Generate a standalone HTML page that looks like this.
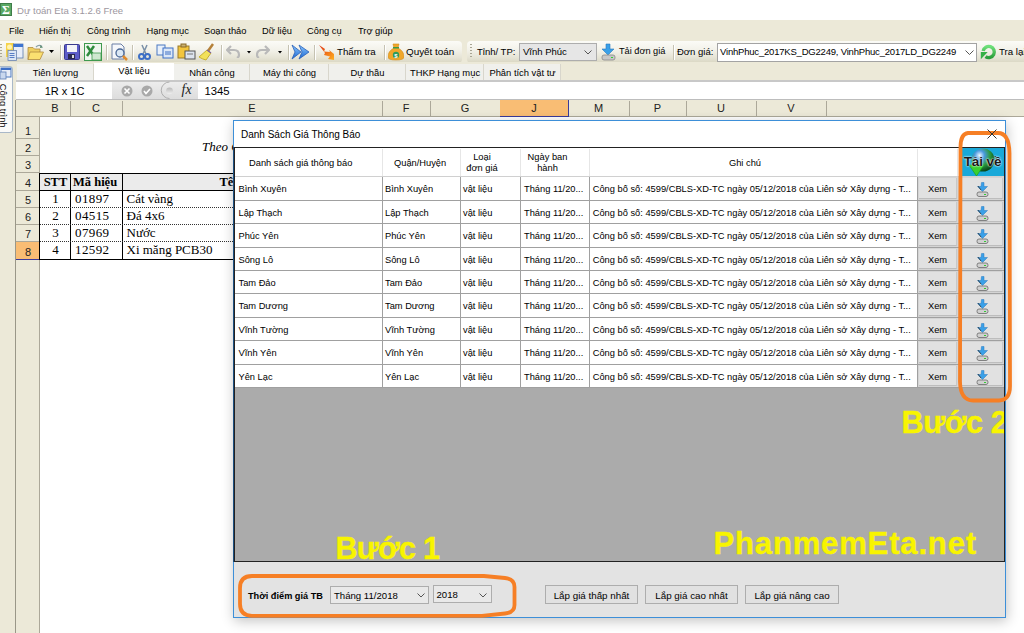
<!DOCTYPE html>
<html><head><meta charset="utf-8">
<style>
*{margin:0;padding:0;box-sizing:border-box}
html,body{width:1024px;height:633px;overflow:hidden;background:#fff;font-family:"Liberation Sans",sans-serif;color:#000}
.a{position:absolute}
.t{position:absolute;white-space:nowrap;line-height:1}
.sr{font-family:"Liberation Serif",serif}
</style></head><body>

<div class="a" style="left:0;top:0;width:1024px;height:20px;background:#fff"></div>
<div class="a" style="left:0;top:3px;width:12px;height:13px;background:#5aa865;border:1px solid #3f7d49"></div>
<div class="t sr" style="left:2px;top:4px;font-size:12px;color:#fff;font-weight:bold">&Sigma;</div>
<div class="t" style="left:17px;top:6px;font-size:9.6px;color:#9d97a0">Dự toán Eta 3.1.2.6 Free</div>
<div class="a" style="left:0;top:20px;width:1024px;height:21px;background:#ece9d8"></div>
<div class="t" style="left:9px;top:27px;font-size:9.3px">File</div>
<div class="t" style="left:39px;top:27px;font-size:9.3px">Hiển thị</div>
<div class="t" style="left:87px;top:27px;font-size:9.3px">Công trình</div>
<div class="t" style="left:146.5px;top:27px;font-size:9.3px">Hạng mục</div>
<div class="t" style="left:204px;top:27px;font-size:9.3px">Soạn thảo</div>
<div class="t" style="left:262px;top:27px;font-size:9.3px">Dữ liệu</div>
<div class="t" style="left:307px;top:27px;font-size:9.3px">Công cụ</div>
<div class="t" style="left:358px;top:27px;font-size:9.3px">Trợ giúp</div>
<div class="a" style="left:0;top:41px;width:1024px;height:21px;background:#ece9d8"></div>
<div class="a" style="left:0;top:41px;width:462px;height:21.5px;background:linear-gradient(#fbfbf7 0%,#f3f2ea 40%,#e6e4d6 75%,#d9d6c2 100%);border-radius:0 4px 4px 0"></div>
<div class="a" style="left:467px;top:41px;width:557px;height:21.5px;background:linear-gradient(#fbfbf7 0%,#f3f2ea 40%,#e6e4d6 75%,#d9d6c2 100%);border-radius:4px 0 0 4px"></div>
<div class="a" style="left:0;top:44px;width:2px;height:14px;background:repeating-linear-gradient(#a8a594 0 1px,transparent 1px 3px)"></div>
<div class="a" style="left:470px;top:44px;width:2px;height:14px;background:repeating-linear-gradient(#a8a594 0 1px,transparent 1px 3px)"></div>
<div class="a" style="left:60px;top:45px;width:1px;height:15px;background:#c5c2b2;box-shadow:1px 0 0 #fff"></div>
<div class="a" style="left:106px;top:45px;width:1px;height:15px;background:#c5c2b2;box-shadow:1px 0 0 #fff"></div>
<div class="a" style="left:132px;top:45px;width:1px;height:15px;background:#c5c2b2;box-shadow:1px 0 0 #fff"></div>
<div class="a" style="left:221px;top:45px;width:1px;height:15px;background:#c5c2b2;box-shadow:1px 0 0 #fff"></div>
<div class="a" style="left:288px;top:45px;width:1px;height:15px;background:#c5c2b2;box-shadow:1px 0 0 #fff"></div>
<div class="a" style="left:314px;top:45px;width:1px;height:15px;background:#c5c2b2;box-shadow:1px 0 0 #fff"></div>
<div class="a" style="left:384px;top:45px;width:1px;height:15px;background:#c5c2b2;box-shadow:1px 0 0 #fff"></div>
<div class="a" style="left:673px;top:45px;width:1px;height:15px;background:#c5c2b2;box-shadow:1px 0 0 #fff"></div>
<svg class="a" style="left:5px;top:43px" width="19" height="18" viewBox="0 0 19 18"><rect x="1" y="0" width="8" height="14" fill="#f5d24a"/><circle cx="4.5" cy="4" r="2.5" fill="#fff3b0"/><rect x="8.5" y="1" width="9.5" height="14" fill="#e8eef9" stroke="#5a7ab0" stroke-width="0.8"/><rect x="8.5" y="1" width="9.5" height="3" fill="#3d74d0"/><rect x="3" y="7.5" width="8.5" height="10" fill="#dbe6f5" stroke="#6a84b0" stroke-width="0.8"/><path d="M4.5 10.5 h5 M4.5 12.5 h5 M4.5 14.5 h5" stroke="#4a72c0" stroke-width="0.9"/></svg>
<svg class="a" style="left:27px;top:44px" width="18" height="17" viewBox="0 0 18 17"><path d="M1 3.5 L6 3.5 L7.5 5 L13 5 L13 8 L1 15.5 Z" fill="#f0d060" stroke="#b08a40" stroke-width="0.8"/><path d="M3 8 L16.5 8 L13 15.5 L1 15.5 Z" fill="#fbe070" stroke="#b08a40" stroke-width="0.8"/><path d="M9 3 Q12 0 15 2.5" fill="none" stroke="#8aa0a8" stroke-width="1.3"/><path d="M13.5 1 L16 3.5 L13 4z" fill="#5a8a70"/></svg>
<svg class="a" style="left:49px;top:50px" width="6" height="4" viewBox="0 0 6 4"><path d="M0 0 h5 l-2.5 3z" fill="#000"/></svg>
<svg class="a" style="left:64px;top:44px" width="16" height="16" viewBox="0 0 16 16"><rect x="0.5" y="0.5" width="15" height="15" rx="1" fill="#5c5cc8" stroke="#3a3a8e"/><rect x="3" y="1" width="10" height="7" fill="#f4f4f8"/><rect x="4" y="10" width="7" height="5" fill="#2a2a50"/><rect x="8" y="11" width="2" height="3" fill="#ddd"/></svg>
<svg class="a" style="left:84px;top:43px" width="18" height="18" viewBox="0 0 18 18"><rect x="0.5" y="0.5" width="17" height="17" fill="#eef6ee" stroke="#3f9a4f"/><path d="M3 3 L10 13 M10 3 L3 13" stroke="#2e8b3c" stroke-width="2.5"/><path d="M8 10 h9 v7 h-9z" fill="#cfe8d0" stroke="#3f9a4f" stroke-width="0.8"/></svg>
<svg class="a" style="left:111px;top:43px" width="17" height="18" viewBox="0 0 17 18"><path d="M1 1 h9 l3 3 v12 h-12z" fill="#f5f7fb" stroke="#6b7fa5"/><circle cx="9" cy="10" r="4" fill="#dbe8f5" stroke="#4b6896" stroke-width="1.3"/><path d="M12 13 l4 4" stroke="#e08a2a" stroke-width="2.5"/></svg>
<svg class="a" style="left:138px;top:44px" width="13" height="16" viewBox="0 0 13 16"><path d="M4 1 l4 9 M9 1 l-4 9" stroke="#7a90a8" stroke-width="1.5"/><circle cx="3.5" cy="12.5" r="2.5" fill="none" stroke="#3d6fc6" stroke-width="2"/><circle cx="9.5" cy="12.5" r="2.5" fill="none" stroke="#3d6fc6" stroke-width="2"/></svg>
<svg class="a" style="left:156px;top:44px" width="18" height="15" viewBox="0 0 18 15"><rect x="1" y="1" width="8" height="10" fill="#e8f0fa" stroke="#4b78c2"/><rect x="7" y="4" width="10" height="10" fill="#dbe7f7" stroke="#3d6fc6"/><line x1="9" y1="8" x2="15" y2="8" stroke="#3d6fc6"/><line x1="9" y1="10" x2="15" y2="10" stroke="#3d6fc6"/></svg>
<svg class="a" style="left:177px;top:43px" width="19" height="17" viewBox="0 0 19 17"><rect x="1" y="3" width="11" height="12" fill="#f2c53d" stroke="#9a7a2a"/><rect x="4" y="1" width="5" height="3" fill="#c8b070" stroke="#8a6a2a"/><rect x="8" y="8" width="10" height="8" fill="#dde4ee" stroke="#555"/><line x1="10" y1="11" x2="16" y2="11" stroke="#777"/></svg>
<svg class="a" style="left:199px;top:43px" width="17" height="18" viewBox="0 0 17 18"><path d="M14 1 l-5 7" stroke="#b5813a" stroke-width="2.5"/><path d="M8 7 l4 3 l-5 7 q-4 -1 -7 -3z" fill="#f2e15a" stroke="#c8b030"/><path d="M8 7 l4 3" stroke="#7a5fa0" stroke-width="1.2"/></svg>
<svg class="a" style="left:226px;top:44px" width="15" height="14" viewBox="0 0 15 14"><path d="M5 2 l-4 4 l4 4 M1 6 h7 q5 0 5 5 q0 2 -2 3" fill="none" stroke="#b9b9b9" stroke-width="2.2"/></svg>
<svg class="a" style="left:247px;top:51px" width="5" height="3" viewBox="0 0 5 3"><path d="M0 0 h4 l-2 2.5z" fill="#000"/></svg>
<svg class="a" style="left:256px;top:44px" width="14" height="14" viewBox="0 0 14 14"><path d="M9 2 l4 4 l-4 4 M13 6 h-7 q-5 0 -5 5 q0 2 2 3" fill="none" stroke="#b9b9b9" stroke-width="2.2"/></svg>
<svg class="a" style="left:278px;top:51px" width="5" height="3" viewBox="0 0 5 3"><path d="M0 0 h4 l-2 2.5z" fill="#000"/></svg>
<svg class="a" style="left:291px;top:44px" width="19" height="16" viewBox="0 0 19 16"><defs><linearGradient id="da" x1="0" y1="0" x2="0" y2="1"><stop offset="0" stop-color="#8cc8ff"/><stop offset="1" stop-color="#1a66d0"/></linearGradient></defs><path d="M1 1 L10 8 L1 15 L4 8z" fill="url(#da)" stroke="#2a5fb8" stroke-width="0.8"/><path d="M8 1 L18 8 L8 15 L11 8z" fill="url(#da)" stroke="#2a5fb8" stroke-width="0.8"/></svg>
<svg class="a" style="left:318px;top:44px" width="17" height="16" viewBox="0 0 17 16"><defs><linearGradient id="tt" x1="0" y1="0" x2="1" y2="1"><stop offset="0" stop-color="#e03010"/><stop offset="1" stop-color="#ffb020"/></linearGradient></defs><path d="M1 1 L7 5 L6 7.5 L12 8 L11 6 L16 10 L16 16 L10 15 L12 12.5 L6 11 L7 9 Z" fill="url(#tt)"/></svg>
<div class="t" style="left:337px;top:47px;font-size:9.7px">Thẩm tra</div>
<svg class="a" style="left:388px;top:43px" width="16" height="18" viewBox="0 0 16 18"><path d="M5 1 h6 l-1 4 q6 3 6 9 q0 3 -8 3 q-8 0 -8 -3 q0 -6 6 -9z" fill="#f0a72a" stroke="#d08a1a" stroke-width="0.6"/><rect x="5" y="4" width="6" height="1.5" fill="#3a9a4a"/><circle cx="8" cy="12" r="3.2" fill="#2f9a5a"/><text x="8" y="14.5" font-size="6" fill="#fff" text-anchor="middle" font-family="Liberation Sans" font-weight="bold">$</text></svg>
<div class="t" style="left:406px;top:47px;font-size:9.9px">Quyết toán</div>
<div class="t" style="left:477px;top:47px;font-size:9.5px">Tỉnh/ TP:</div>
<div class="a" style="left:519px;top:43px;width:78px;height:18px;background:#e6e6e6;border:1px solid #adadad"></div>
<div class="t" style="left:523px;top:47px;font-size:9.5px">Vĩnh Phúc</div>
<svg class="a" style="left:584px;top:50px" width="8" height="5" viewBox="0 0 8 5"><path d="M0.5 0.5 l3.5 3.5 l3.5 -3.5" fill="none" stroke="#555" stroke-width="1"/></svg>
<svg class="a" style="left:601px;top:43px" width="15" height="18" viewBox="0 0 15 18"><path d="M5 1 h4 v5 h4 l-6 6 l-6 -6 h4z" fill="#3aa0e8" stroke="#2a7ac0" stroke-width="0.6"/><rect x="1" y="12" width="13" height="5" rx="2" fill="#c8c8c8" stroke="#888" stroke-width="0.8"/><rect x="10" y="14" width="2" height="1" fill="#3c3"/></svg>
<div class="t" style="left:619px;top:47px;font-size:9.2px">Tải đơn giá</div>
<div class="t" style="left:677px;top:47px;font-size:9.5px">Đơn giá:</div>
<div class="a" style="left:717px;top:43px;width:260px;height:19px;background:#fff;border:1px solid #a3a3a3"></div>
<div class="t" style="left:720px;top:47px;font-size:9.5px;letter-spacing:-0.2px">VinhPhuc_2017KS_DG2249, VinhPhuc_2017LD_DG2249</div>
<svg class="a" style="left:965px;top:50px" width="9" height="5" viewBox="0 0 9 5"><path d="M0.5 0.5 l4 4 l4 -4" fill="none" stroke="#555" stroke-width="1"/></svg>
<svg class="a" style="left:980px;top:43px" width="18" height="18" viewBox="0 0 18 18"><defs><linearGradient id="rf" x1="0" y1="0" x2="0" y2="1"><stop offset="0" stop-color="#6ee07a"/><stop offset="1" stop-color="#2a9e3c"/></linearGradient></defs><path d="M3.2 8 A5.6 5.6 0 1 1 5.5 13.6" stroke="url(#rf)" stroke-width="3.4" fill="none"/><path d="M0.8 9 L7.7 9 L0.8 16.3 Z" fill="#34b046"/></svg>
<div class="t" style="left:999px;top:47px;font-size:9.7px">Tra lại</div>
<div class="a" style="left:0;top:62px;width:1024px;height:19px;background:#ece9d8"></div>
<div class="a" style="left:17px;top:64px;width:77px;height:17px;background:#f0f0ec;border-right:1px solid #d8d6cc"></div>
<div class="t" style="left:17px;top:68px;width:77px;text-align:center;font-size:9.4px">Tiên lượng</div>
<div class="a" style="left:94px;top:63px;width:80px;height:18px;background:#fff"></div>
<div class="t" style="left:94px;top:66px;width:80px;text-align:center;font-size:9.4px">Vật liệu</div>
<div class="a" style="left:174px;top:64px;width:76px;height:17px;background:#f0f0ec;border-right:1px solid #d8d6cc"></div>
<div class="t" style="left:174px;top:68px;width:76px;text-align:center;font-size:9.4px">Nhân công</div>
<div class="a" style="left:250px;top:64px;width:79px;height:17px;background:#f0f0ec;border-right:1px solid #d8d6cc"></div>
<div class="t" style="left:250px;top:68px;width:79px;text-align:center;font-size:9.4px">Máy thi công</div>
<div class="a" style="left:329px;top:64px;width:77px;height:17px;background:#f0f0ec;border-right:1px solid #d8d6cc"></div>
<div class="t" style="left:329px;top:68px;width:77px;text-align:center;font-size:9.4px">Dự thầu</div>
<div class="a" style="left:406px;top:64px;width:78px;height:17px;background:#f0f0ec;border-right:1px solid #d8d6cc"></div>
<div class="t" style="left:406px;top:68px;width:78px;text-align:center;font-size:9.4px">THKP Hạng mục</div>
<div class="a" style="left:484px;top:64px;width:77px;height:17px;background:#f0f0ec;border-right:1px solid #d8d6cc"></div>
<div class="t" style="left:484px;top:68px;width:77px;text-align:center;font-size:9.4px">Phân tích vật tư</div>
<div class="a" style="left:16px;top:80px;width:1008px;height:2px;background:#c8c8c8"></div>
<div class="a" style="left:16px;top:82px;width:1008px;height:18px;background:#fff"></div>
<div class="a" style="left:112px;top:82px;width:86px;height:18px;background:linear-gradient(#ececec,#dcdcdc)"></div>
<div class="t" style="left:17px;top:86px;width:95px;text-align:center;font-size:11px">1R x 1C</div>
<svg class="a" style="left:121px;top:85px" width="12" height="12" viewBox="0 0 12 12"><circle cx="6" cy="6" r="5.5" fill="#a9a9a9"/><path d="M3.5 3.5 l5 5 M8.5 3.5 l-5 5" stroke="#fff" stroke-width="1.6"/></svg>
<svg class="a" style="left:141px;top:85px" width="12" height="12" viewBox="0 0 12 12"><circle cx="6" cy="6" r="5.5" fill="#a9a9a9"/><path d="M3 6 l2 2.5 l4 -4.5" fill="none" stroke="#fff" stroke-width="1.6"/></svg>
<svg class="a" style="left:160px;top:81px" width="18" height="19" viewBox="0 0 18 19"><defs><linearGradient id="rb" x1="0" y1="0" x2="0" y2="1"><stop offset="0" stop-color="#b8b8b8"/><stop offset="1" stop-color="#f0f0f0"/></linearGradient></defs><path d="M9.5 1 A8.25 8.25 0 0 0 9.5 17.5" fill="none" stroke="#a8a8a8" stroke-width="0.9"/><circle cx="9.5" cy="9.8" r="3.4" fill="url(#rb)"/></svg>
<div class="t sr" style="left:181.5px;top:83px;font-size:14px;font-style:italic;color:#222">fx</div>
<div class="t" style="left:204.5px;top:86px;font-size:11.3px">1345</div>
<div class="a" style="left:16px;top:99px;width:1008px;height:1px;background:#bdbdbd"></div>
<div class="a" style="left:0;top:62px;width:16px;height:571px;background:#ece9d8"></div>
<div class="a" style="left:-3px;top:66px;width:16px;height:67px;background:#fafaf8;border:1px solid #a9b8c8;border-radius:0 3px 3px 0"></div>
<svg class="a" style="left:0px;top:67px" width="12" height="13" viewBox="0 0 12 13"><rect x="1" y="1" width="10" height="9" fill="#e8eef8" stroke="#4a78c0"/><rect x="1" y="1" width="10" height="2" fill="#3d6fc6"/><rect x="0" y="5" width="6" height="7" fill="#c9d8ee" stroke="#5f7fb5" stroke-width="0.8"/></svg>
<div class="t" style="left:-25px;top:101px;font-size:9.4px;transform:rotate(90deg);transform-origin:center;width:56px;text-align:center">Công trình</div>
<div class="a" style="left:16px;top:100px;width:1008px;height:17px;background:#ece9d8;border-bottom:1px solid #aca899"></div>
<div class="a" style="left:15px;top:100px;width:1px;height:533px;background:#9a9788"></div>
<div class="a" style="left:70px;top:101px;width:1px;height:16px;background:#aca899"></div>
<div class="t" style="left:40px;top:103px;width:30px;text-align:center;font-size:11px;color:#222">B</div>
<div class="a" style="left:122px;top:101px;width:1px;height:16px;background:#aca899"></div>
<div class="t" style="left:70px;top:103px;width:52px;text-align:center;font-size:11px;color:#222">C</div>
<div class="a" style="left:382px;top:101px;width:1px;height:16px;background:#aca899"></div>
<div class="t" style="left:122px;top:103px;width:260px;text-align:center;font-size:11px;color:#222">E</div>
<div class="a" style="left:430px;top:101px;width:1px;height:16px;background:#aca899"></div>
<div class="t" style="left:382px;top:103px;width:48px;text-align:center;font-size:11px;color:#222">F</div>
<div class="a" style="left:500px;top:101px;width:1px;height:16px;background:#aca899"></div>
<div class="t" style="left:430px;top:103px;width:70px;text-align:center;font-size:11px;color:#222">G</div>
<div class="a" style="left:500px;top:100px;width:69px;height:17px;background:#f9bd74;border-right:1px solid #3b3b9a;border-bottom:1px solid #3b3b9a"></div>
<div class="t" style="left:500px;top:103px;width:68px;text-align:center;font-size:11px;color:#222">J</div>
<div class="a" style="left:629px;top:101px;width:1px;height:16px;background:#aca899"></div>
<div class="t" style="left:568px;top:103px;width:61px;text-align:center;font-size:11px;color:#222">M</div>
<div class="a" style="left:686px;top:101px;width:1px;height:16px;background:#aca899"></div>
<div class="t" style="left:629px;top:103px;width:57px;text-align:center;font-size:11px;color:#222">P</div>
<div class="a" style="left:756px;top:101px;width:1px;height:16px;background:#aca899"></div>
<div class="t" style="left:686px;top:103px;width:70px;text-align:center;font-size:11px;color:#222">U</div>
<div class="a" style="left:826px;top:101px;width:1px;height:16px;background:#aca899"></div>
<div class="t" style="left:756px;top:103px;width:70px;text-align:center;font-size:11px;color:#222">V</div>
<div class="a" style="left:16px;top:117px;width:24px;height:516px;background:#ece9d8;border-right:1px solid #aca899"></div>
<div class="a" style="left:16px;top:138px;width:24px;height:1px;background:#aca899"></div>
<div class="t" style="left:16px;top:125.5px;width:24px;text-align:center;font-size:11px;color:#222">1</div>
<div class="a" style="left:16px;top:155px;width:24px;height:1px;background:#aca899"></div>
<div class="t" style="left:16px;top:143.0px;width:24px;text-align:center;font-size:11px;color:#222">2</div>
<div class="a" style="left:16px;top:172px;width:24px;height:1px;background:#aca899"></div>
<div class="t" style="left:16px;top:160.0px;width:24px;text-align:center;font-size:11px;color:#222">3</div>
<div class="a" style="left:16px;top:190px;width:24px;height:1px;background:#aca899"></div>
<div class="t" style="left:16px;top:177.5px;width:24px;text-align:center;font-size:11px;color:#222">4</div>
<div class="a" style="left:16px;top:207px;width:24px;height:1px;background:#aca899"></div>
<div class="t" style="left:16px;top:195.0px;width:24px;text-align:center;font-size:11px;color:#222">5</div>
<div class="a" style="left:16px;top:224px;width:24px;height:1px;background:#aca899"></div>
<div class="t" style="left:16px;top:212.0px;width:24px;text-align:center;font-size:11px;color:#222">6</div>
<div class="a" style="left:16px;top:241px;width:24px;height:1px;background:#aca899"></div>
<div class="t" style="left:16px;top:229.0px;width:24px;text-align:center;font-size:11px;color:#222">7</div>
<div class="a" style="left:16px;top:242px;width:24px;height:18px;background:#f9bd74;border-right:1px solid #3b3b9a;border-bottom:1px solid #3b3b9a"></div>
<div class="t" style="left:16px;top:246.5px;width:24px;text-align:center;font-size:11px;color:#222">8</div>
<div class="a" style="left:40px;top:173px;width:340px;height:18px;background:#ebebeb"></div>
<div class="a" style="left:40px;top:173px;width:340px;height:1px;background:#000"></div>
<div class="a" style="left:40px;top:190px;width:340px;height:1px;background:#000"></div>
<div class="a" style="left:40px;top:259px;width:340px;height:1px;background:#000"></div>
<div class="a" style="left:39px;top:173px;width:1px;height:87px;background:#000"></div>
<div class="a" style="left:70px;top:173px;width:1px;height:87px;background:#000"></div>
<div class="a" style="left:122px;top:173px;width:1px;height:87px;background:#000"></div>
<div class="a" style="left:40px;top:207px;width:340px;height:1px;background:repeating-linear-gradient(90deg,#333 0 1px,transparent 1px 2px)"></div>
<div class="a" style="left:40px;top:224px;width:340px;height:1px;background:repeating-linear-gradient(90deg,#333 0 1px,transparent 1px 2px)"></div>
<div class="a" style="left:40px;top:241px;width:340px;height:1px;background:repeating-linear-gradient(90deg,#333 0 1px,transparent 1px 2px)"></div>
<div class="t sr" style="left:41px;top:176px;width:29px;text-align:center;font-size:12.5px;font-weight:bold">STT</div>
<div class="t sr" style="left:73px;top:176px;font-size:12.5px;font-weight:bold">Mã hiệu</div>
<div class="t sr" style="left:219.5px;top:176px;font-size:12.5px;font-weight:bold">Tên</div>
<div class="t sr" style="left:41px;top:192px;width:29px;text-align:center;font-size:13px">1</div>
<div class="t sr" style="left:75px;top:192px;font-size:13px;letter-spacing:0.4px">01897</div>
<div class="t sr" style="left:126.5px;top:192px;font-size:13px">Cát vàng</div>
<div class="t sr" style="left:41px;top:209px;width:29px;text-align:center;font-size:13px">2</div>
<div class="t sr" style="left:75px;top:209px;font-size:13px;letter-spacing:0.4px">04515</div>
<div class="t sr" style="left:126.5px;top:209px;font-size:13px">Đá 4x6</div>
<div class="t sr" style="left:41px;top:226px;width:29px;text-align:center;font-size:13px">3</div>
<div class="t sr" style="left:75px;top:226px;font-size:13px;letter-spacing:0.4px">07969</div>
<div class="t sr" style="left:126.5px;top:226px;font-size:13px">Nước</div>
<div class="t sr" style="left:41px;top:243px;width:29px;text-align:center;font-size:13px">4</div>
<div class="t sr" style="left:75px;top:243px;font-size:13px;letter-spacing:0.4px">12592</div>
<div class="t sr" style="left:126.5px;top:243px;font-size:13px">Xi măng PCB30</div>
<div class="t sr" style="left:202px;top:139.5px;font-size:13px;font-style:italic">Theo C</div>
<div class="a" style="left:233px;top:120px;width:773px;height:498px;box-shadow:1px 3px 12px rgba(0,0,0,0.24)"></div>
<div class="a" style="left:233px;top:120px;width:773px;height:498px;background:#fff;border:1px solid #3d8fd8"></div>
<div class="t" style="left:241px;top:130px;font-size:10px">Danh Sách Giá Thông Báo</div>
<div class="a" style="left:234px;top:147px;width:771px;height:415px;background:#ababab;border:1px solid #222"></div>
<div class="a" style="left:233px;top:147px;width:1px;height:415px;background:#1d4f80"></div>
<div class="a" style="left:235px;top:148px;width:769px;height:29px;background:#fff;border-bottom:1px solid #d0d0d0"></div>
<div class="a" style="left:382px;top:149px;width:1px;height:27px;background:#e6e6e6"></div>
<div class="a" style="left:460px;top:149px;width:1px;height:27px;background:#e6e6e6"></div>
<div class="a" style="left:520px;top:149px;width:1px;height:27px;background:#e6e6e6"></div>
<div class="a" style="left:589px;top:149px;width:1px;height:27px;background:#e6e6e6"></div>
<div class="a" style="left:917px;top:149px;width:1px;height:27px;background:#e6e6e6"></div>
<div class="a" style="left:957px;top:149px;width:1px;height:27px;background:#e6e6e6"></div>
<div class="t" style="left:249px;top:159px;font-size:9.3px">Danh sách giá thông báo</div>
<div class="t" style="left:394px;top:159px;font-size:9.3px">Quận/Huyện</div>
<div class="t" style="left:452px;top:151.5px;width:60px;text-align:center;font-size:9.3px;line-height:11px">Loại<br>đơn giá</div>
<div class="t" style="left:513px;top:151.5px;width:69px;text-align:center;font-size:9.3px;line-height:11px">Ngày ban<br>hành</div>
<div class="t" style="left:705px;top:159px;width:80px;text-align:center;font-size:9.3px">Ghi chú</div>
<div class="a" style="left:961px;top:148px;width:43px;height:28px;background:#19a9d9"></div>
<svg class="a" style="left:961px;top:148px" width="43" height="28" viewBox="0 0 43 28"><defs><radialGradient id="gl" cx="35%" cy="30%" r="70%"><stop offset="0" stop-color="#f0f8ff"/><stop offset="0.3" stop-color="#4a9ae0"/><stop offset="0.65" stop-color="#2a9a40"/><stop offset="1" stop-color="#0a4a1a"/></radialGradient></defs><circle cx="22" cy="12" r="11.5" fill="url(#gl)"/><path d="M8 17 h15 l-7.5 11z" fill="#3ad030" stroke="#1a9a1a" stroke-width="0.6"/></svg>
<div class="t" style="left:961px;top:154.5px;width:43px;text-align:center;font-size:13.5px;font-weight:bold;color:#1a1a1a;text-shadow:0 0 1.5px #fff,0 0 2px #dff"><span style="letter-spacing:-0.1px">Tải về</span></div>
<div class="a" style="left:235px;top:177px;width:769px;height:24px;background:#fff;border-bottom:1px solid #a0a0a0"></div>
<div class="a" style="left:382px;top:177px;width:1px;height:24px;background:#a0a0a0"></div>
<div class="a" style="left:460px;top:177px;width:1px;height:24px;background:#a0a0a0"></div>
<div class="a" style="left:520px;top:177px;width:1px;height:24px;background:#a0a0a0"></div>
<div class="a" style="left:589px;top:177px;width:1px;height:24px;background:#a0a0a0"></div>
<div class="a" style="left:917px;top:177px;width:1px;height:24px;background:#a0a0a0"></div>
<div class="t" style="left:238.5px;top:184.8px;font-size:9.3px">Bình Xuyên</div>
<div class="t" style="left:385px;top:184.8px;font-size:9.3px">Bình Xuyên</div>
<div class="t" style="left:463px;top:184.8px;font-size:9.3px">vật liệu</div>
<div class="t" style="left:524px;top:184.8px;font-size:9.3px">Tháng 11/20...</div>
<div class="t" style="left:592.7px;top:184.8px;font-size:9.3px">Công bố số: 4599/CBLS-XD-TC ngày 05/12/2018 của Liên sở Xây dựng - T...</div>
<div class="a" style="left:918px;top:177px;width:86px;height:23px;background:#d4d4d4"></div>
<div class="a" style="left:919px;top:178px;width:38px;height:21px;background:#e1e1e1;border-bottom:1px solid #bdbdbd;border-right:1px solid #c8c8c8"></div>
<div class="t" style="left:918px;top:184.8px;width:39px;text-align:center;font-size:9.3px">Xem</div>
<div class="a" style="left:962px;top:178px;width:41px;height:21px;background:#e1e1e1;border-bottom:1px solid #bdbdbd;border-right:1px solid #c8c8c8"></div>
<svg class="a" style="left:976px;top:182px" width="13" height="16" viewBox="0 0 13 16"><path d="M5.5 0.5 h2.5 v4 h3.5 l-5 5 l-5 -5 h3.5z" fill="#3aa0e8" stroke="#2a7ac0" stroke-width="0.5"/><path d="M2 4 l3 4" stroke="#333" stroke-width="0.8"/><rect x="1" y="10" width="11" height="4.5" rx="2" fill="#d0d0d0" stroke="#6a6a6a" stroke-width="0.8"/><rect x="8" y="12" width="2" height="1" fill="#3c3"/></svg>
<div class="a" style="left:235px;top:201px;width:769px;height:23px;background:#fff;border-bottom:1px solid #a0a0a0"></div>
<div class="a" style="left:382px;top:201px;width:1px;height:23px;background:#a0a0a0"></div>
<div class="a" style="left:460px;top:201px;width:1px;height:23px;background:#a0a0a0"></div>
<div class="a" style="left:520px;top:201px;width:1px;height:23px;background:#a0a0a0"></div>
<div class="a" style="left:589px;top:201px;width:1px;height:23px;background:#a0a0a0"></div>
<div class="a" style="left:917px;top:201px;width:1px;height:23px;background:#a0a0a0"></div>
<div class="t" style="left:238.5px;top:208.8px;font-size:9.3px">Lập Thạch</div>
<div class="t" style="left:385px;top:208.8px;font-size:9.3px">Lập Thạch</div>
<div class="t" style="left:463px;top:208.8px;font-size:9.3px">vật liệu</div>
<div class="t" style="left:524px;top:208.8px;font-size:9.3px">Tháng 11/20...</div>
<div class="t" style="left:592.7px;top:208.8px;font-size:9.3px">Công bố số: 4599/CBLS-XD-TC ngày 05/12/2018 của Liên sở Xây dựng - T...</div>
<div class="a" style="left:918px;top:201px;width:86px;height:22px;background:#d4d4d4"></div>
<div class="a" style="left:919px;top:202px;width:38px;height:20px;background:#e1e1e1;border-bottom:1px solid #bdbdbd;border-right:1px solid #c8c8c8"></div>
<div class="t" style="left:918px;top:208.8px;width:39px;text-align:center;font-size:9.3px">Xem</div>
<div class="a" style="left:962px;top:202px;width:41px;height:20px;background:#e1e1e1;border-bottom:1px solid #bdbdbd;border-right:1px solid #c8c8c8"></div>
<svg class="a" style="left:976px;top:206px" width="13" height="16" viewBox="0 0 13 16"><path d="M5.5 0.5 h2.5 v4 h3.5 l-5 5 l-5 -5 h3.5z" fill="#3aa0e8" stroke="#2a7ac0" stroke-width="0.5"/><path d="M2 4 l3 4" stroke="#333" stroke-width="0.8"/><rect x="1" y="10" width="11" height="4.5" rx="2" fill="#d0d0d0" stroke="#6a6a6a" stroke-width="0.8"/><rect x="8" y="12" width="2" height="1" fill="#3c3"/></svg>
<div class="a" style="left:235px;top:224px;width:769px;height:24px;background:#fff;border-bottom:1px solid #a0a0a0"></div>
<div class="a" style="left:382px;top:224px;width:1px;height:24px;background:#a0a0a0"></div>
<div class="a" style="left:460px;top:224px;width:1px;height:24px;background:#a0a0a0"></div>
<div class="a" style="left:520px;top:224px;width:1px;height:24px;background:#a0a0a0"></div>
<div class="a" style="left:589px;top:224px;width:1px;height:24px;background:#a0a0a0"></div>
<div class="a" style="left:917px;top:224px;width:1px;height:24px;background:#a0a0a0"></div>
<div class="t" style="left:238.5px;top:231.8px;font-size:9.3px">Phúc Yên</div>
<div class="t" style="left:385px;top:231.8px;font-size:9.3px">Phúc Yên</div>
<div class="t" style="left:463px;top:231.8px;font-size:9.3px">vật liệu</div>
<div class="t" style="left:524px;top:231.8px;font-size:9.3px">Tháng 11/20...</div>
<div class="t" style="left:592.7px;top:231.8px;font-size:9.3px">Công bố số: 4599/CBLS-XD-TC ngày 05/12/2018 của Liên sở Xây dựng - T...</div>
<div class="a" style="left:918px;top:224px;width:86px;height:23px;background:#d4d4d4"></div>
<div class="a" style="left:919px;top:225px;width:38px;height:21px;background:#e1e1e1;border-bottom:1px solid #bdbdbd;border-right:1px solid #c8c8c8"></div>
<div class="t" style="left:918px;top:231.8px;width:39px;text-align:center;font-size:9.3px">Xem</div>
<div class="a" style="left:962px;top:225px;width:41px;height:21px;background:#e1e1e1;border-bottom:1px solid #bdbdbd;border-right:1px solid #c8c8c8"></div>
<svg class="a" style="left:976px;top:229px" width="13" height="16" viewBox="0 0 13 16"><path d="M5.5 0.5 h2.5 v4 h3.5 l-5 5 l-5 -5 h3.5z" fill="#3aa0e8" stroke="#2a7ac0" stroke-width="0.5"/><path d="M2 4 l3 4" stroke="#333" stroke-width="0.8"/><rect x="1" y="10" width="11" height="4.5" rx="2" fill="#d0d0d0" stroke="#6a6a6a" stroke-width="0.8"/><rect x="8" y="12" width="2" height="1" fill="#3c3"/></svg>
<div class="a" style="left:235px;top:248px;width:769px;height:23px;background:#fff;border-bottom:1px solid #a0a0a0"></div>
<div class="a" style="left:382px;top:248px;width:1px;height:23px;background:#a0a0a0"></div>
<div class="a" style="left:460px;top:248px;width:1px;height:23px;background:#a0a0a0"></div>
<div class="a" style="left:520px;top:248px;width:1px;height:23px;background:#a0a0a0"></div>
<div class="a" style="left:589px;top:248px;width:1px;height:23px;background:#a0a0a0"></div>
<div class="a" style="left:917px;top:248px;width:1px;height:23px;background:#a0a0a0"></div>
<div class="t" style="left:238.5px;top:255.8px;font-size:9.3px">Sông Lô</div>
<div class="t" style="left:385px;top:255.8px;font-size:9.3px">Sông Lô</div>
<div class="t" style="left:463px;top:255.8px;font-size:9.3px">vật liệu</div>
<div class="t" style="left:524px;top:255.8px;font-size:9.3px">Tháng 11/20...</div>
<div class="t" style="left:592.7px;top:255.8px;font-size:9.3px">Công bố số: 4599/CBLS-XD-TC ngày 05/12/2018 của Liên sở Xây dựng - T...</div>
<div class="a" style="left:918px;top:248px;width:86px;height:22px;background:#d4d4d4"></div>
<div class="a" style="left:919px;top:249px;width:38px;height:20px;background:#e1e1e1;border-bottom:1px solid #bdbdbd;border-right:1px solid #c8c8c8"></div>
<div class="t" style="left:918px;top:255.8px;width:39px;text-align:center;font-size:9.3px">Xem</div>
<div class="a" style="left:962px;top:249px;width:41px;height:20px;background:#e1e1e1;border-bottom:1px solid #bdbdbd;border-right:1px solid #c8c8c8"></div>
<svg class="a" style="left:976px;top:253px" width="13" height="16" viewBox="0 0 13 16"><path d="M5.5 0.5 h2.5 v4 h3.5 l-5 5 l-5 -5 h3.5z" fill="#3aa0e8" stroke="#2a7ac0" stroke-width="0.5"/><path d="M2 4 l3 4" stroke="#333" stroke-width="0.8"/><rect x="1" y="10" width="11" height="4.5" rx="2" fill="#d0d0d0" stroke="#6a6a6a" stroke-width="0.8"/><rect x="8" y="12" width="2" height="1" fill="#3c3"/></svg>
<div class="a" style="left:235px;top:271px;width:769px;height:23px;background:#fff;border-bottom:1px solid #a0a0a0"></div>
<div class="a" style="left:382px;top:271px;width:1px;height:23px;background:#a0a0a0"></div>
<div class="a" style="left:460px;top:271px;width:1px;height:23px;background:#a0a0a0"></div>
<div class="a" style="left:520px;top:271px;width:1px;height:23px;background:#a0a0a0"></div>
<div class="a" style="left:589px;top:271px;width:1px;height:23px;background:#a0a0a0"></div>
<div class="a" style="left:917px;top:271px;width:1px;height:23px;background:#a0a0a0"></div>
<div class="t" style="left:238.5px;top:278.8px;font-size:9.3px">Tam Đảo</div>
<div class="t" style="left:385px;top:278.8px;font-size:9.3px">Tam Đảo</div>
<div class="t" style="left:463px;top:278.8px;font-size:9.3px">vật liệu</div>
<div class="t" style="left:524px;top:278.8px;font-size:9.3px">Tháng 11/20...</div>
<div class="t" style="left:592.7px;top:278.8px;font-size:9.3px">Công bố số: 4599/CBLS-XD-TC ngày 05/12/2018 của Liên sở Xây dựng - T...</div>
<div class="a" style="left:918px;top:271px;width:86px;height:22px;background:#d4d4d4"></div>
<div class="a" style="left:919px;top:272px;width:38px;height:20px;background:#e1e1e1;border-bottom:1px solid #bdbdbd;border-right:1px solid #c8c8c8"></div>
<div class="t" style="left:918px;top:278.8px;width:39px;text-align:center;font-size:9.3px">Xem</div>
<div class="a" style="left:962px;top:272px;width:41px;height:20px;background:#e1e1e1;border-bottom:1px solid #bdbdbd;border-right:1px solid #c8c8c8"></div>
<svg class="a" style="left:976px;top:276px" width="13" height="16" viewBox="0 0 13 16"><path d="M5.5 0.5 h2.5 v4 h3.5 l-5 5 l-5 -5 h3.5z" fill="#3aa0e8" stroke="#2a7ac0" stroke-width="0.5"/><path d="M2 4 l3 4" stroke="#333" stroke-width="0.8"/><rect x="1" y="10" width="11" height="4.5" rx="2" fill="#d0d0d0" stroke="#6a6a6a" stroke-width="0.8"/><rect x="8" y="12" width="2" height="1" fill="#3c3"/></svg>
<div class="a" style="left:235px;top:294px;width:769px;height:24px;background:#fff;border-bottom:1px solid #a0a0a0"></div>
<div class="a" style="left:382px;top:294px;width:1px;height:24px;background:#a0a0a0"></div>
<div class="a" style="left:460px;top:294px;width:1px;height:24px;background:#a0a0a0"></div>
<div class="a" style="left:520px;top:294px;width:1px;height:24px;background:#a0a0a0"></div>
<div class="a" style="left:589px;top:294px;width:1px;height:24px;background:#a0a0a0"></div>
<div class="a" style="left:917px;top:294px;width:1px;height:24px;background:#a0a0a0"></div>
<div class="t" style="left:238.5px;top:301.8px;font-size:9.3px">Tam Dương</div>
<div class="t" style="left:385px;top:301.8px;font-size:9.3px">Tam Dương</div>
<div class="t" style="left:463px;top:301.8px;font-size:9.3px">vật liệu</div>
<div class="t" style="left:524px;top:301.8px;font-size:9.3px">Tháng 11/20...</div>
<div class="t" style="left:592.7px;top:301.8px;font-size:9.3px">Công bố số: 4599/CBLS-XD-TC ngày 05/12/2018 của Liên sở Xây dựng - T...</div>
<div class="a" style="left:918px;top:294px;width:86px;height:23px;background:#d4d4d4"></div>
<div class="a" style="left:919px;top:295px;width:38px;height:21px;background:#e1e1e1;border-bottom:1px solid #bdbdbd;border-right:1px solid #c8c8c8"></div>
<div class="t" style="left:918px;top:301.8px;width:39px;text-align:center;font-size:9.3px">Xem</div>
<div class="a" style="left:962px;top:295px;width:41px;height:21px;background:#e1e1e1;border-bottom:1px solid #bdbdbd;border-right:1px solid #c8c8c8"></div>
<svg class="a" style="left:976px;top:299px" width="13" height="16" viewBox="0 0 13 16"><path d="M5.5 0.5 h2.5 v4 h3.5 l-5 5 l-5 -5 h3.5z" fill="#3aa0e8" stroke="#2a7ac0" stroke-width="0.5"/><path d="M2 4 l3 4" stroke="#333" stroke-width="0.8"/><rect x="1" y="10" width="11" height="4.5" rx="2" fill="#d0d0d0" stroke="#6a6a6a" stroke-width="0.8"/><rect x="8" y="12" width="2" height="1" fill="#3c3"/></svg>
<div class="a" style="left:235px;top:318px;width:769px;height:23px;background:#fff;border-bottom:1px solid #a0a0a0"></div>
<div class="a" style="left:382px;top:318px;width:1px;height:23px;background:#a0a0a0"></div>
<div class="a" style="left:460px;top:318px;width:1px;height:23px;background:#a0a0a0"></div>
<div class="a" style="left:520px;top:318px;width:1px;height:23px;background:#a0a0a0"></div>
<div class="a" style="left:589px;top:318px;width:1px;height:23px;background:#a0a0a0"></div>
<div class="a" style="left:917px;top:318px;width:1px;height:23px;background:#a0a0a0"></div>
<div class="t" style="left:238.5px;top:325.8px;font-size:9.3px">Vĩnh Tường</div>
<div class="t" style="left:385px;top:325.8px;font-size:9.3px">Vĩnh Tường</div>
<div class="t" style="left:463px;top:325.8px;font-size:9.3px">vật liệu</div>
<div class="t" style="left:524px;top:325.8px;font-size:9.3px">Tháng 11/20...</div>
<div class="t" style="left:592.7px;top:325.8px;font-size:9.3px">Công bố số: 4599/CBLS-XD-TC ngày 05/12/2018 của Liên sở Xây dựng - T...</div>
<div class="a" style="left:918px;top:318px;width:86px;height:22px;background:#d4d4d4"></div>
<div class="a" style="left:919px;top:319px;width:38px;height:20px;background:#e1e1e1;border-bottom:1px solid #bdbdbd;border-right:1px solid #c8c8c8"></div>
<div class="t" style="left:918px;top:325.8px;width:39px;text-align:center;font-size:9.3px">Xem</div>
<div class="a" style="left:962px;top:319px;width:41px;height:20px;background:#e1e1e1;border-bottom:1px solid #bdbdbd;border-right:1px solid #c8c8c8"></div>
<svg class="a" style="left:976px;top:323px" width="13" height="16" viewBox="0 0 13 16"><path d="M5.5 0.5 h2.5 v4 h3.5 l-5 5 l-5 -5 h3.5z" fill="#3aa0e8" stroke="#2a7ac0" stroke-width="0.5"/><path d="M2 4 l3 4" stroke="#333" stroke-width="0.8"/><rect x="1" y="10" width="11" height="4.5" rx="2" fill="#d0d0d0" stroke="#6a6a6a" stroke-width="0.8"/><rect x="8" y="12" width="2" height="1" fill="#3c3"/></svg>
<div class="a" style="left:235px;top:341px;width:769px;height:24px;background:#fff;border-bottom:1px solid #a0a0a0"></div>
<div class="a" style="left:382px;top:341px;width:1px;height:24px;background:#a0a0a0"></div>
<div class="a" style="left:460px;top:341px;width:1px;height:24px;background:#a0a0a0"></div>
<div class="a" style="left:520px;top:341px;width:1px;height:24px;background:#a0a0a0"></div>
<div class="a" style="left:589px;top:341px;width:1px;height:24px;background:#a0a0a0"></div>
<div class="a" style="left:917px;top:341px;width:1px;height:24px;background:#a0a0a0"></div>
<div class="t" style="left:238.5px;top:348.8px;font-size:9.3px">Vĩnh Yên</div>
<div class="t" style="left:385px;top:348.8px;font-size:9.3px">Vĩnh Yên</div>
<div class="t" style="left:463px;top:348.8px;font-size:9.3px">vật liệu</div>
<div class="t" style="left:524px;top:348.8px;font-size:9.3px">Tháng 11/20...</div>
<div class="t" style="left:592.7px;top:348.8px;font-size:9.3px">Công bố số: 4599/CBLS-XD-TC ngày 05/12/2018 của Liên sở Xây dựng - T...</div>
<div class="a" style="left:918px;top:341px;width:86px;height:23px;background:#d4d4d4"></div>
<div class="a" style="left:919px;top:342px;width:38px;height:21px;background:#e1e1e1;border-bottom:1px solid #bdbdbd;border-right:1px solid #c8c8c8"></div>
<div class="t" style="left:918px;top:348.8px;width:39px;text-align:center;font-size:9.3px">Xem</div>
<div class="a" style="left:962px;top:342px;width:41px;height:21px;background:#e1e1e1;border-bottom:1px solid #bdbdbd;border-right:1px solid #c8c8c8"></div>
<svg class="a" style="left:976px;top:346px" width="13" height="16" viewBox="0 0 13 16"><path d="M5.5 0.5 h2.5 v4 h3.5 l-5 5 l-5 -5 h3.5z" fill="#3aa0e8" stroke="#2a7ac0" stroke-width="0.5"/><path d="M2 4 l3 4" stroke="#333" stroke-width="0.8"/><rect x="1" y="10" width="11" height="4.5" rx="2" fill="#d0d0d0" stroke="#6a6a6a" stroke-width="0.8"/><rect x="8" y="12" width="2" height="1" fill="#3c3"/></svg>
<div class="a" style="left:235px;top:365px;width:769px;height:23px;background:#fff;border-bottom:1px solid #a0a0a0"></div>
<div class="a" style="left:382px;top:365px;width:1px;height:23px;background:#a0a0a0"></div>
<div class="a" style="left:460px;top:365px;width:1px;height:23px;background:#a0a0a0"></div>
<div class="a" style="left:520px;top:365px;width:1px;height:23px;background:#a0a0a0"></div>
<div class="a" style="left:589px;top:365px;width:1px;height:23px;background:#a0a0a0"></div>
<div class="a" style="left:917px;top:365px;width:1px;height:23px;background:#a0a0a0"></div>
<div class="t" style="left:238.5px;top:372.8px;font-size:9.3px">Yên Lạc</div>
<div class="t" style="left:385px;top:372.8px;font-size:9.3px">Yên Lạc</div>
<div class="t" style="left:463px;top:372.8px;font-size:9.3px">vật liệu</div>
<div class="t" style="left:524px;top:372.8px;font-size:9.3px">Tháng 11/20...</div>
<div class="t" style="left:592.7px;top:372.8px;font-size:9.3px">Công bố số: 4599/CBLS-XD-TC ngày 05/12/2018 của Liên sở Xây dựng - T...</div>
<div class="a" style="left:918px;top:365px;width:86px;height:22px;background:#d4d4d4"></div>
<div class="a" style="left:919px;top:366px;width:38px;height:20px;background:#e1e1e1;border-bottom:1px solid #bdbdbd;border-right:1px solid #c8c8c8"></div>
<div class="t" style="left:918px;top:372.8px;width:39px;text-align:center;font-size:9.3px">Xem</div>
<div class="a" style="left:962px;top:366px;width:41px;height:20px;background:#e1e1e1;border-bottom:1px solid #bdbdbd;border-right:1px solid #c8c8c8"></div>
<svg class="a" style="left:976px;top:370px" width="13" height="16" viewBox="0 0 13 16"><path d="M5.5 0.5 h2.5 v4 h3.5 l-5 5 l-5 -5 h3.5z" fill="#3aa0e8" stroke="#2a7ac0" stroke-width="0.5"/><path d="M2 4 l3 4" stroke="#333" stroke-width="0.8"/><rect x="1" y="10" width="11" height="4.5" rx="2" fill="#d0d0d0" stroke="#6a6a6a" stroke-width="0.8"/><rect x="8" y="12" width="2" height="1" fill="#3c3"/></svg>
<div class="a" style="left:234px;top:562px;width:771px;height:55px;background:#e3e3e3"></div>
<div class="t" style="left:248px;top:591.5px;font-size:9.2px;font-weight:bold">Thời điểm giá TB</div>
<div class="a" style="left:330px;top:586px;width:99px;height:18px;background:#e9e9e9;border:1px solid #adadad"></div>
<div class="t" style="left:334px;top:591px;font-size:9.6px">Tháng 11/2018</div>
<svg class="a" style="left:417px;top:593px" width="8" height="5" viewBox="0 0 8 5"><path d="M0.5 0.5 l3.5 3.5 l3.5 -3.5" fill="none" stroke="#555" stroke-width="1"/></svg>
<div class="a" style="left:433px;top:585px;width:59px;height:18px;background:#e9e9e9;border:1px solid #adadad"></div>
<div class="t" style="left:436.5px;top:590px;font-size:9.6px">2018</div>
<svg class="a" style="left:479px;top:593px" width="8" height="5" viewBox="0 0 8 5"><path d="M0.5 0.5 l3.5 3.5 l3.5 -3.5" fill="none" stroke="#555" stroke-width="1"/></svg>
<div class="a" style="left:545px;top:585px;width:93px;height:19px;background:#e1e1e1;border:1px solid #adadad"></div>
<div class="t" style="left:545px;top:591px;width:93px;text-align:center;font-size:9.8px">Lắp giá thấp nhất</div>
<div class="a" style="left:645px;top:585px;width:93px;height:19px;background:#e1e1e1;border:1px solid #adadad"></div>
<div class="t" style="left:645px;top:591px;width:93px;text-align:center;font-size:9.8px">Lắp giá cao nhất</div>
<div class="a" style="left:745px;top:585px;width:94px;height:19px;background:#e1e1e1;border:1px solid #adadad"></div>
<div class="t" style="left:745px;top:591px;width:94px;text-align:center;font-size:9.8px">Lắp giá nâng cao</div>
<svg class="a" style="left:0;top:0" width="1024" height="633" viewBox="0 0 1024 633"><path d="M968 133 Q960.5 134 960.5 147 L960 382 Q960.5 400.5 973 400.5 L999 400.5 Q1010 400 1010 386 L1009.5 153 Q1009 133 998 133 Z" fill="none" stroke="#f67f25" stroke-width="3.8"/><path d="M252 576 L484 576 L505 578 Q514.5 579 514.5 587 L514.5 605 Q514.5 612.5 505 613.5 L482 615.8 L252 615.8 Q240 615.8 240 604 L240 588 Q240 576 252 576 Z" fill="none" stroke="#f67f25" stroke-width="3.8"/></svg>
<svg class="a" style="left:987px;top:129px" width="10" height="10" viewBox="0 0 10 10"><path d="M0.5 0.5 l9 9 M9.5 0.5 l-9 9" stroke="#333" stroke-width="1"/></svg>
<div class="a" style="left:880px;top:400px;width:124px;height:40px;overflow:hidden"><div class="t" style="left:21.5px;top:7px;font-size:30.5px;font-weight:bold;color:#f8f400;letter-spacing:-0.4px;-webkit-text-stroke:0.4px #f8f400">Bước 2</div></div>
<div class="t" style="left:713.5px;top:527.5px;font-size:31px;font-weight:bold;color:#f8f400;letter-spacing:0.85px;-webkit-text-stroke:0.4px #f8f400">PhanmemEta.net</div>
<div class="t" style="left:335.5px;top:532.5px;font-size:30.5px;font-weight:bold;color:#f8f400;letter-spacing:-0.75px;-webkit-text-stroke:0.4px #f8f400">Bước 1</div>
</body></html>
